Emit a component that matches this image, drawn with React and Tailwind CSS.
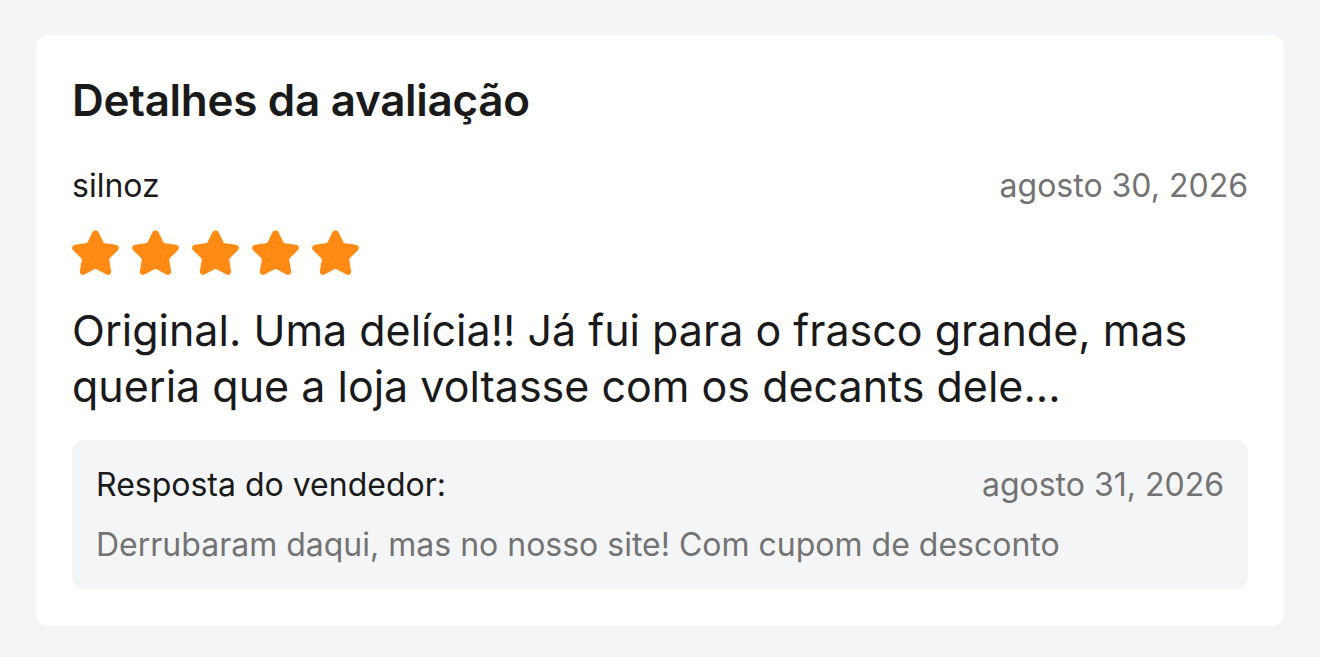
import React from 'react';

const review = {
  author: 'silnoz',
  date: 'agosto 30, 2026',
  rating: 5,
  text: 'Original. Uma delícia!! Já fui para o frasco grande, mas queria que a loja voltasse com os decants dele...',
  reply: {
    date: 'agosto 31, 2026',
    text: 'Derrubaram daqui, mas no nosso site! Com cupom de desconto',
  },
};

// filled star with rounded tips
const Star = () => (
  <svg
    viewBox="0 0 24 24"
    className="w-[51px] h-[51px]"
    fill="#FF8A14"
    stroke="#FF8A14"
    strokeWidth="2"
    strokeLinejoin="round"
  >
    <path d="M11.525 2.295a.53.53 0 0 1 .95 0l2.31 4.679a2.123 2.123 0 0 0 1.595 1.16l5.166.756a.53.53 0 0 1 .294.904l-3.736 3.638a2.123 2.123 0 0 0-.611 1.878l.882 5.14a.53.53 0 0 1-.771.56l-4.618-2.428a2.122 2.122 0 0 0-1.973 0L6.396 21.01a.53.53 0 0 1-.77-.56l.881-5.139a2.122 2.122 0 0 0-.611-1.879L2.16 9.795a.53.53 0 0 1 .294-.906l5.165-.755a2.122 2.122 0 0 0 1.597-1.16z" />
  </svg>
);

export default function App() {
  return (
    <div className="min-h-screen bg-[#f3f4f6] px-9 pt-[35px] pb-8 font-['Inter',sans-serif]">
      <div className="bg-white rounded-xl px-9 pt-[39px] pb-[37px]">
        <h2 className="text-[44px] leading-[52px] font-semibold text-[#1a1a1a] tracking-[-0.3px]">
          Detalhes da avaliação
        </h2>

        <div className="mt-[40px] flex items-center justify-between">
          <span className="text-[32px] leading-[40px] text-[#1a1a1a]">{review.author}</span>
          <span className="text-[32px] leading-[40px] text-[#737373]">{review.date}</span>
        </div>

        <div className="mt-[22px] flex items-center gap-[9px] -ml-[2px]">
          {Array.from({ length: review.rating }).map((_, i) => (
            <Star key={i} />
          ))}
        </div>

        <p className="mt-[23px] text-[43px] leading-[56px] text-[#1a1a1a]">{review.text}</p>

        <div className="mt-[26px] bg-[#f4f5f7] rounded-xl px-6 pt-[25px] pb-[24px]">
          <div className="flex items-center justify-between">
            <span className="text-[32px] leading-[40px] text-[#1a1a1a]">Resposta do vendedor:</span>
            <span className="text-[32px] leading-[40px] text-[#737373]">{review.reply.date}</span>
          </div>
          <p className="mt-[20px] text-[32px] leading-[40px] text-[#737373]">{review.reply.text}</p>
        </div>
      </div>
    </div>
  );
}
